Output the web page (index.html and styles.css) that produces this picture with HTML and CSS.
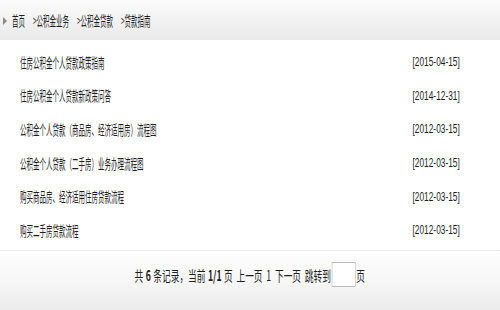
FILE: index.html
```html
<!DOCTYPE html>
<html lang="zh-CN">
<head>
    <meta charset="UTF-8">
    <title>贷款指南</title>
    <link rel="stylesheet" href="styles.css">
</head>
<body>
    <div class="crumb-bar">
        <span class="crumb-arrow"></span>
        <span class="squeeze crumbs">首页 &gt;公积金业务 &gt;公积金贷款 &gt;贷款指南</span>
    </div>

    <ul class="news-list">
        <li><span class="squeeze title">住房公积金个人贷款政策指南</span><span class="squeeze date">[2015-04-15]</span></li>
        <li><span class="squeeze title">住房公积金个人贷款新政策问答</span><span class="squeeze date">[2014-12-31]</span></li>
        <li><span class="squeeze title">公积金个人贷款（商品房、经济适用房）流程图</span><span class="squeeze date">[2012-03-15]</span></li>
        <li><span class="squeeze title">公积金个人贷款（二手房）业务办理流程图</span><span class="squeeze date">[2012-03-15]</span></li>
        <li><span class="squeeze title">购买商品房、经济适用住房贷款流程</span><span class="squeeze date">[2012-03-15]</span></li>
        <li><span class="squeeze title">购买二手房贷款流程</span><span class="squeeze date">[2012-03-15]</span></li>
    </ul>

    <div class="pager">
        <div class="pager-inner">
            共 <b>6</b> 条记录，当前 <b>1/1</b> 页 上一页 1 下一页 跳转到<input class="jump-box" type="text">页
        </div>
    </div>
</body>
</html>
```

FILE: styles.css
```css
body {
    margin: 0;
    padding: 0;
    background: #fff;
    font-family: "Noto Sans CJK SC", "Liberation Sans", sans-serif;
    font-size: 14px;
    color: #1e1e1e;
    width: 500px;
    height: 310px;
    overflow: hidden;
}

/* the original text is drawn narrow, so squeeze it sideways */
.squeeze {
    display: inline-block;
    white-space: nowrap;
    transform: scaleX(0.464);
    transform-origin: left center;
}

/* Breadcrumb */
.crumb-bar {
    height: 40px;
    display: flex;
    align-items: center;
    background: linear-gradient(#fbfbfb, #e9e9e9);
    padding-left: 3px;
    box-sizing: border-box;
}

.crumb-arrow {
    width: 0;
    height: 0;
    border-top: 4px solid transparent;
    border-bottom: 4px solid transparent;
    border-left: 4px solid #8a8a8a;
    margin-right: 5px;
    margin-top: 2px;
}

.crumbs {
    word-spacing: 14px;
}

/* List */
.news-list {
    list-style: none;
    margin: 0;
    padding: 5px 0 0 0;
}

.news-list li {
    height: 33.6px;
    display: flex;
    align-items: center;
    justify-content: space-between;
    padding: 0 40px 0 20px;
}

.news-list .date {
    font-family: "Liberation Sans", sans-serif;
    font-size: 13px;
    transform: scaleX(0.64);
    transform-origin: right center;
}

/* Pager */
.pager {
    margin-top: 3px;
    height: 60px;
    padding-bottom: 11px;
    box-sizing: border-box;
    border-top: 1px solid #ececec;
    background: linear-gradient(#fefefe, #f7f7f7 50%, #ebebeb);
    display: flex;
    align-items: center;
    justify-content: center;
}

.pager-inner {
    white-space: nowrap;
    transform: scaleX(0.62);
    display: flex;
    align-items: center;
    word-spacing: 3px;
}

.pager-inner b {
    margin: 0 4px;
}

.jump-box {
    width: 39px;
    height: 25px;
    border: 1px solid #bbb;
    padding: 0;
    margin: 0 1px;
    box-sizing: border-box;
    background: #fff;
}
```
